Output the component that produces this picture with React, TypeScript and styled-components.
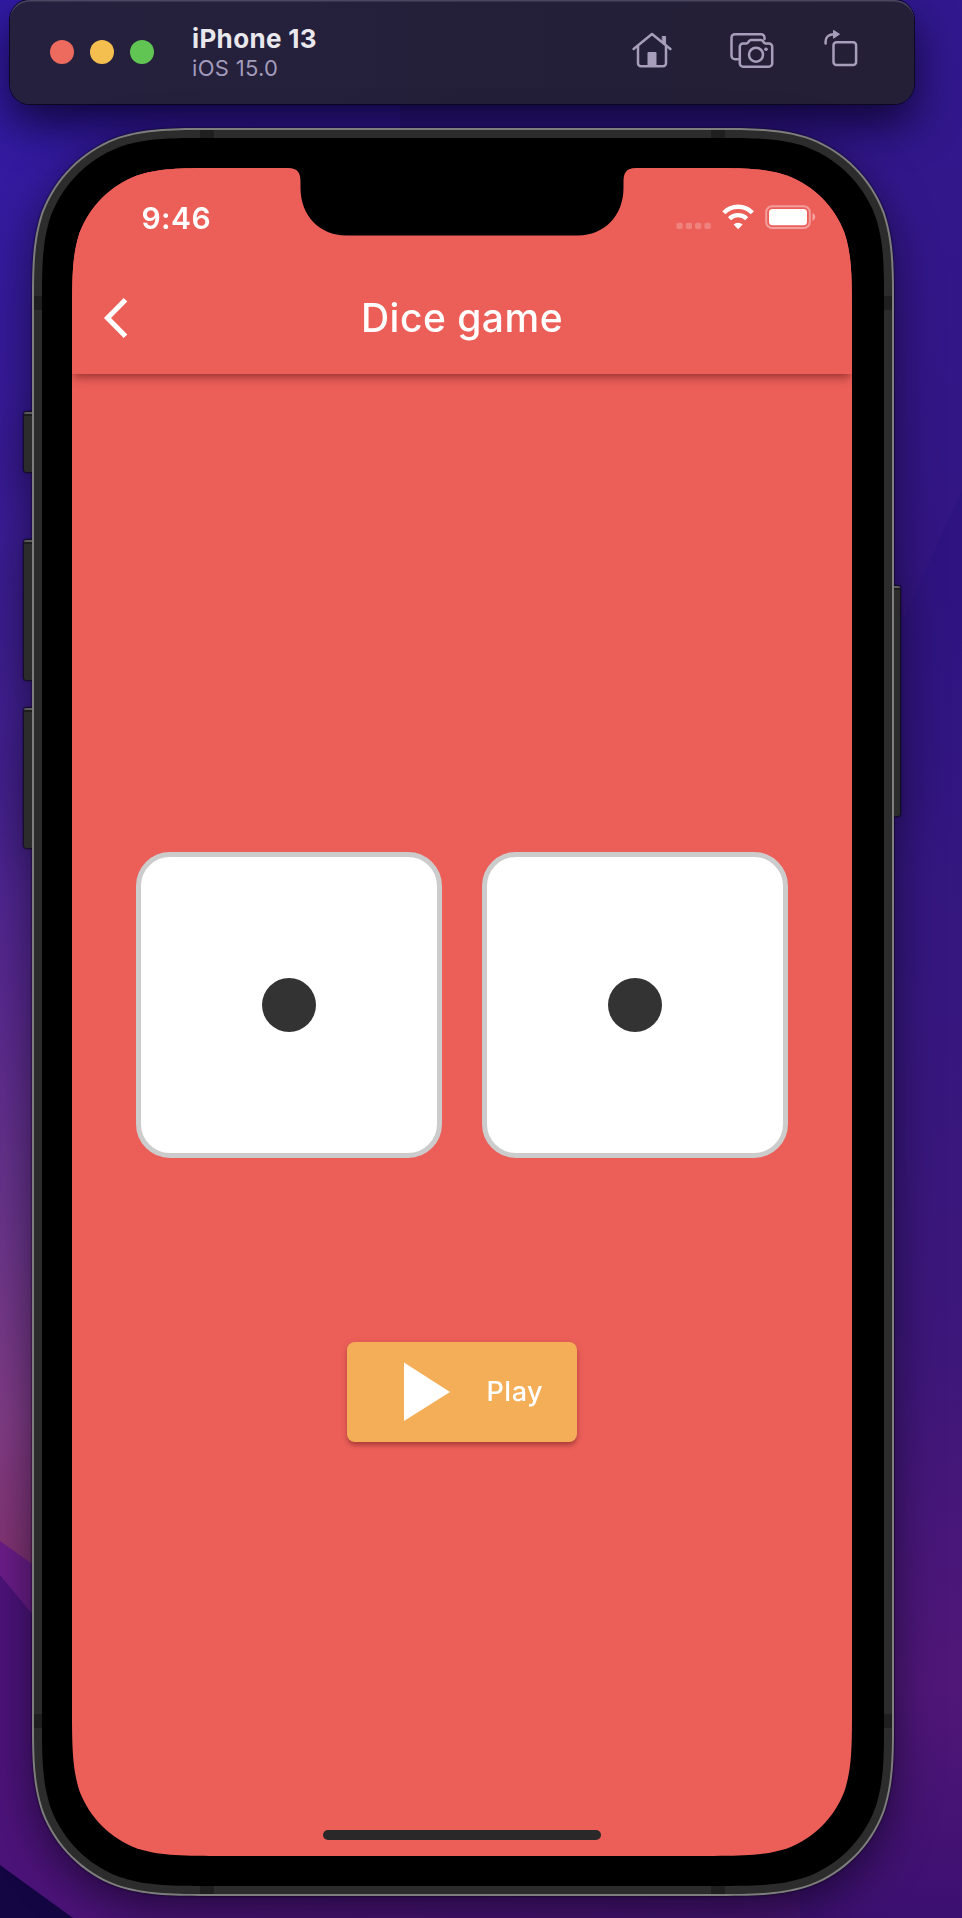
import React from "react";
import styled, { createGlobalStyle } from "styled-components";

/**
 * Rounded rectangle with continuous corners.
 * smooth = 0 gives a circular corner, 1 the fully eased one.
 */
const squircle = (w: number, h: number, r: number, smooth: number) => {
  const mix = (from: number, to: number) => +((from + (to - from) * smooth) * r).toFixed(3);
  const a = mix(1, 1.528665);
  const b = mix(0.8736, 1.08849);
  const c = mix(0.749, 0.868407);
  const k = mix(0.028, 0);
  const d = 0.631494 * r;
  const e = 0.375 * r;
  const f = 0.1735 * r;
  const g = 0.074911 * r;
  return [
    `M${a} 0 L${w - a} 0`,
    `C${w - b} 0 ${w - c} ${k} ${w - d} ${g}`,
    `C${w - e} ${f} ${w - f} ${e} ${w - g} ${d}`,
    `C${w - k} ${c} ${w} ${b} ${w} ${a}`,
    `L${w} ${h - a}`,
    `C${w} ${h - b} ${w - k} ${h - c} ${w - g} ${h - d}`,
    `C${w - f} ${h - e} ${w - e} ${h - f} ${w - d} ${h - g}`,
    `C${w - c} ${h - k} ${w - b} ${h} ${w - a} ${h}`,
    `L${a} ${h}`,
    `C${b} ${h} ${c} ${h - k} ${d} ${h - g}`,
    `C${e} ${h - f} ${f} ${h - e} ${g} ${h - d}`,
    `C${k} ${h - c} 0 ${h - b} 0 ${h - a}`,
    `L0 ${a}`,
    `C0 ${b} ${k} ${c} ${g} ${d}`,
    `C${f} ${e} ${e} ${f} ${d} ${g}`,
    `C${c} ${k} ${b} 0 ${a} 0 Z`,
  ].join(" ");
};

const GlobalStyle = createGlobalStyle`
  *, *::before, *::after { box-sizing: border-box; }
  body { margin: 0; font-family: Inter, "Liberation Sans", sans-serif; }
  button { font-family: inherit; border: 0; padding: 0; }
`;

const Desktop = styled.div`
  position: relative;
  width: 962px;
  height: 1918px;
  overflow: hidden;
  isolation: isolate;
`;

const Wallpaper = styled.svg`
  position: absolute;
  inset: 0;
  z-index: -1;
`;

const TitleBar = styled.header`
  position: relative;
  display: flex;
  align-items: center;
  width: 904px;
  height: 104px;
  margin-left: 10px;
  padding: 0 56px 0 40px;
  border-radius: 20px;
  background: linear-gradient(90deg, #25203d, #241f36);
  box-shadow: 0 0 0 1px #0c0820, 0 20px 44px rgba(8, 2, 30, 0.75),
    inset 0 2px 0 -0.5px #4b4760;
`;

const TrafficLights = styled.div`
  display: flex;
  gap: 16px;
`;

const Light = styled.span<{ $color: string }>`
  width: 24px;
  height: 24px;
  border-radius: 50%;
  background: ${({ $color }) => $color};
`;

const DeviceLabel = styled.div`
  display: flex;
  flex-direction: column;
  margin: 2px 0 0 38px;
`;

const DeviceName = styled.span`
  font-size: 26px;
  line-height: 30px;
  font-weight: 700;
  letter-spacing: 0.35px;
  color: #e9e8ec;
`;

const DeviceOs = styled.span`
  font-size: 22px;
  line-height: 29px;
  letter-spacing: 0.3px;
  color: #a29bba;
`;

const Tools = styled.div`
  display: flex;
  align-items: flex-end;
  gap: 58px;
  height: 38px;
  margin: -6px 0 0 auto;
  color: #a69eba;

  svg { display: block; }
  svg:last-child { margin: 0 0 1px -8px; }
`;

const DeviceRow = styled.div`
  display: flex;
  align-items: flex-start;
  margin: 24px 0 0 24px;
  filter: drop-shadow(0 0 1px #080410) drop-shadow(0 14px 22px rgba(12, 3, 28, 0.62));
`;

const Rail = styled.div<{ $top: number; $width: number }>`
  display: flex;
  flex-direction: column;
  width: ${({ $width }) => $width}px;
  padding-top: ${({ $top }) => $top}px;
`;

const SideKey = styled.div<{ $height: number; $gap?: number; $right?: boolean }>`
  height: ${({ $height }) => $height}px;
  margin-bottom: ${({ $gap = 0 }) => $gap}px;
  border-radius: ${({ $right }) => ($right ? "0 2px 2px 0" : "2px 0 0 2px")};
  background: linear-gradient(#5c5c5e 0 2px, #1d1d1e 2px 4px, #2b2c2b 4px);
  box-shadow: 0 0 0 0.5px #111012;
`;

const Rim = styled.div`
  width: 862px;
  height: 1768px;
  padding: 2px;
  background: #7e7e7e;
  clip-path: path("${squircle(862, 1768, 132, 0.5)}");
`;

const Band = styled.div`
  position: relative;
  width: 858px;
  height: 1764px;
  padding: 8px;
  background: #2c2c2c;
  clip-path: path("${squircle(858, 1764, 130, 0.5)}");
`;

const AntennaAcross = styled.div<{ $x: number }>`
  position: absolute;
  top: 0;
  bottom: 0;
  left: ${({ $x }) => $x}px;
  width: 14px;
  background: #1f1f1f;
`;

const AntennaSide = styled.div<{ $y: number }>`
  position: absolute;
  left: 0;
  right: 0;
  top: ${({ $y }) => $y}px;
  height: 14px;
  background: #1f1f1f;
`;

const Bezel = styled.div`
  position: relative;
  width: 842px;
  height: 1748px;
  padding: 30px 32px 30px 30px;
  background: #000;
  clip-path: path("${squircle(842, 1748, 122, 0.5)}");
`;

const Screen = styled.main`
  position: relative;
  display: flex;
  flex-direction: column;
  align-items: center;
  width: 780px;
  height: 1688px;
  background: #ec5f59;
  color: #fff;
  clip-path: path("${squircle(780, 1688, 102, 0.8)}");
`;

const AppBar = styled.div`
  position: relative;
  flex: none;
  width: 780px;
  height: 206px;
  background: #ec5f59;
  box-shadow: 0 4px 8px -2px rgba(60, 0, 0, 0.42), 0 8px 10px -2px rgba(60, 0, 0, 0.12);
`;

const Notch = styled.svg`
  position: absolute;
  top: 0;
  left: 216px;
`;

const StatusBar = styled.div`
  display: flex;
  align-items: center;
  justify-content: space-between;
  height: 94px;
  padding: 4px 36px 0 69.5px;
`;

const Clock = styled.span`
  margin-top: 1px;
  font-size: 30px;
  line-height: 36px;
  font-weight: 600;
  letter-spacing: 0.4px;
`;

const StatusIcons = styled.svg`
  display: block;
`;

const NavBar = styled.div`
  display: grid;
  grid-template-columns: 80px 1fr 80px;
  align-items: center;
  height: 112px;
`;

const BackButton = styled.button`
  display: flex;
  padding-left: 31px;
  background: none;
  color: inherit;
`;

const Title = styled.h1`
  margin: 0;
  font-size: 39px;
  line-height: 48px;
  font-weight: 500;
  letter-spacing: 0.5px;
  text-align: center;
`;

const DiceRow = styled.div`
  display: flex;
  gap: 40px;
  margin-top: 478px;
`;

const Die = styled.div`
  display: flex;
  align-items: center;
  justify-content: center;
  width: 306px;
  height: 306px;
  border: 5px solid #ccc;
  border-radius: 34px;
  background: #fff;
`;

const Pip = styled.span`
  width: 54px;
  height: 54px;
  border-radius: 50%;
  background: #333;
`;

const PlayButton = styled.button`
  display: flex;
  align-items: center;
  width: 230px;
  height: 100px;
  margin-top: 184px;
  padding-left: 57px;
  gap: 35.5px;
  border-radius: 8px;
  background: #f4ae57;
  color: #fff;
  font-size: 27px;
  line-height: 34px;
  font-weight: 550;
  letter-spacing: 0.5px;
  box-shadow: 0 4px 4px -1px rgba(60, 0, 0, 0.28), 0 2px 7px rgba(60, 0, 0, 0.16);
`;

const HomeIndicator = styled.div`
  width: 278px;
  height: 10px;
  margin: auto 0 16px;
  border-radius: 5px;
  background: #2b2829;
`;

const HomeIcon = () => (
  <svg width="40" height="36" viewBox="0 0 40 36" fill="none" stroke="currentColor" strokeWidth="2.5" strokeLinecap="round" strokeLinejoin="round">
    <path d="M1.600 17 20 2l18.400 15" />
    <path d="M6 14.500V31.300a3 3 0 0 0 3 3h22a3 3 0 0 0 3-3V14.500" />
    <path d="M30.600 4.500h3v9l-3-2.400z" fill="currentColor" strokeWidth="1" />
    <path d="M15.500 34.500V21a1 1 0 0 1 1-1h7a1 1 0 0 1 1 1v13.500z" fill="currentColor" stroke="none" />
  </svg>
);

const CameraIcon = () => (
  <svg width="44" height="36" viewBox="0 0 44 36" fill="none" stroke="currentColor" strokeWidth="2.500" strokeLinecap="round" strokeLinejoin="round">
    <path d="M34.500 7V5.700a3.500 3.500 0 0 0-3.500-3.500H5A3.500 3.500 0 0 0 1.500 5.700v18A3.500 3.500 0 0 0 5 27.200h3" />
    <path d="M9.800 14.700a3.300 3.300 0 0 1 3.300-3.300h3.400c.8 0 1.200-.3 1.600-.9l.8-1.200c.6-.8 1.200-1.200 2.200-1.200h9.800c1 0 1.600.4 2.200 1.200l.8 1.200c.4.600.8.900 1.600.900h3.400a3.300 3.300 0 0 1 3.300 3.300v16.700a3.300 3.300 0 0 1-3.300 3.300H13.100a3.300 3.300 0 0 1-3.300-3.300z" />
    <circle cx="26" cy="22.700" r="7" />
    <circle cx="36" cy="17.200" r="1.800" fill="currentColor" stroke="none" />
  </svg>
);

const RotateIcon = () => (
  <svg width="34" height="38" viewBox="0 0 34 38" fill="none" stroke="currentColor" strokeWidth="2.500" strokeLinecap="round" strokeLinejoin="round">
    <rect x="9.500" y="13.300" width="22.600" height="22.600" rx="3" />
    <path d="M1.600 14.500v-2C1.600 8 5 5.200 10 5.200" />
    <path d="M9.800 1.600 15.500 5.200 9.800 9z" fill="currentColor" strokeWidth="1" />
  </svg>
);

const StatusGlyphs = () => (
  <StatusIcons width="140" height="26" viewBox="0 0 140 26" fill="#fff">
    <g opacity="0.22">
      {[0, 9.3, 18.6, 28].map((x) => (
        <rect key={x} x={x + 0.5} y="18.800" width="6.200" height="6.200" rx="1.800" />
      ))}
    </g>
    <g fill="none" stroke="#fff" strokeWidth="4.400">
      <path d="M47.800 8.700a20 20 0 0 1 28.600 0" />
      <path d="M53.500 14.700a12.200 12.200 0 0 1 17.200 0" />
    </g>
    <path d="M57.600 20.600a6.300 6.300 0 0 1 9 0L62.100 25.200z" />
    <rect x="90.200" y="2.200" width="43.600" height="21.800" rx="6" fill="none" stroke="#fff" strokeOpacity="0.400" strokeWidth="2" />
    <rect x="93" y="5" width="38" height="16.200" rx="3.500" />
    <path d="M136.500 9.300a4 4 0 0 1 0 7.600z" opacity="0.450" />
  </StatusIcons>
);

const Background = () => (
  <Wallpaper width="962" height="1918" viewBox="0 0 962 1918" aria-hidden="true">
    <defs>
      <linearGradient id="left" x1="0" y1="0" x2="0" y2="1">
        <stop offset="0" stopColor="#311ba5" />
        <stop offset="0.220" stopColor="#361a96" />
        <stop offset="0.400" stopColor="#432190" />
        <stop offset="0.520" stopColor="#58298e" />
        <stop offset="0.640" stopColor="#6a358a" />
        <stop offset="0.740" stopColor="#803c84" />
        <stop offset="0.820" stopColor="#823370" />
      </linearGradient>
      <linearGradient id="right" x1="0" y1="0" x2="0" y2="1">
        <stop offset="0" stopColor="#31188f" />
        <stop offset="0.300" stopColor="#331582" />
        <stop offset="0.500" stopColor="#35177f" />
        <stop offset="0.700" stopColor="#3d177a" />
        <stop offset="0.880" stopColor="#501778" />
        <stop offset="1" stopColor="#3c1070" />
      </linearGradient>
      <linearGradient id="facet" x1="0" y1="0" x2="0" y2="1">
        <stop offset="0" stopColor="#2c1380" stopOpacity="0.800" />
        <stop offset="1" stopColor="#2c1380" stopOpacity="0" />
      </linearGradient>
      <linearGradient id="base" x1="0" y1="0" x2="1" y2="0">
        <stop offset="0" stopColor="#4c1379" />
        <stop offset="1" stopColor="#45136f" />
      </linearGradient>
    </defs>
    <rect width="962" height="1918" fill="url(#right)" />
    <path d="M0 0h400v1918H0z" fill="url(#left)" />
    <path d="M962 490 862 710V900h100z" fill="url(#facet)" />
    <path d="M0 1541 100 1612V1918H0z" fill="#6b1d88" />
    <path d="M0 1575 120 1720H800V1918H0z" fill="url(#base)" />
    <path d="M0 1865 73 1918H0z" fill="#140642" />
  </Wallpaper>
);

export default function App() {
  return (
    <>
      <GlobalStyle />
      <Desktop>
        <Background />
        <TitleBar>
          <TrafficLights>
            <Light $color="#ed6a5e" />
            <Light $color="#f5bf4f" />
            <Light $color="#61c554" />
          </TrafficLights>
          <DeviceLabel>
            <DeviceName>iPhone 13</DeviceName>
            <DeviceOs>iOS 15.0</DeviceOs>
          </DeviceLabel>
          <Tools>
            <HomeIcon />
            <CameraIcon />
            <RotateIcon />
          </Tools>
        </TitleBar>
        <DeviceRow>
          <Rail $top={284} $width={8}>
            <SideKey $height={60} $gap={68} />
            <SideKey $height={140} $gap={28} />
            <SideKey $height={140} />
          </Rail>
          <Rim>
            <Band>
              <AntennaAcross $x={166} />
              <AntennaAcross $x={677} />
              <AntennaSide $y={166} />
              <AntennaSide $y={1584} />
              <Bezel>
                <Screen>
                  <AppBar>
                    <StatusBar>
                      <Clock>9:46</Clock>
                      <StatusGlyphs />
                    </StatusBar>
                    <NavBar>
                      <BackButton aria-label="Back">
                        <svg width="26" height="42" viewBox="0 0 26 42" fill="none" stroke="currentColor" strokeWidth="5">
                          <path d="M22.500 2.800 4.500 21l18 18.200" />
                        </svg>
                      </BackButton>
                      <Title>Dice game</Title>
                    </NavBar>
                    <Notch width="348" height="68" viewBox="0 0 348 68">
                      <path d="M0 0C10 0 12.500 5 12.500 14V20C12.500 48 32 67.400 58 67.400H290C316 67.400 335.500 48 335.500 20V14C335.500 5 338 0 348 0Z" />
                    </Notch>
                  </AppBar>
                  <DiceRow>
                    <Die><Pip /></Die>
                    <Die><Pip /></Die>
                  </DiceRow>
                  <PlayButton>
                    <svg width="47" height="60" viewBox="0 0 47 60" fill="currentColor">
                      <path d="M0 0.500 46 30 0 59z" />
                    </svg>
                    Play
                  </PlayButton>
                  <HomeIndicator />
                </Screen>
              </Bezel>
            </Band>
          </Rim>
          <Rail $top={458} $width={6}>
            <SideKey $right $height={230} />
          </Rail>
        </DeviceRow>
      </Desktop>
    </>
  );
}
